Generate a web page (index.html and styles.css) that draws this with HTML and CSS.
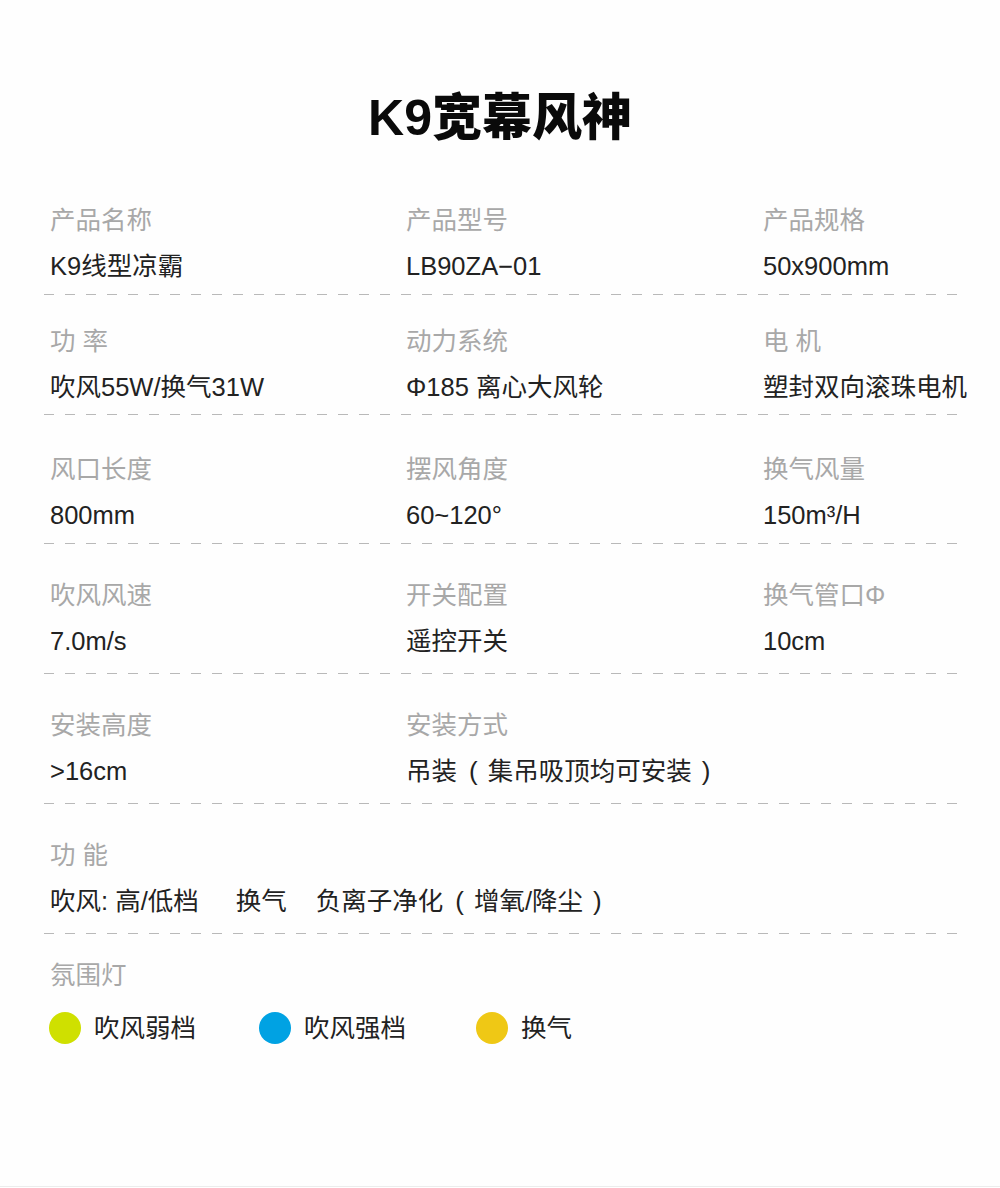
FILE: index.html
```html
<!DOCTYPE html>
<html lang="zh">
<head>
<meta charset="utf-8">
<title>K9宽幕风神</title>
<link rel="stylesheet" href="styles.css">
</head>
<body>
<div class="page">
  <h1 class="title"><span class="latin">K9</span>宽幕风神</h1>
  <div class="specs">
    <div class="row row--first">
      <div class="cell"><div class="label">产品名称</div><div class="value">K9线型凉霸</div></div>
      <div class="cell"><div class="label">产品型号</div><div class="value">LB90ZA−01</div></div>
      <div class="cell"><div class="label">产品规格</div><div class="value">50x900mm</div></div>
    </div>
    <div class="row row--second">
      <div class="cell"><div class="label">功 率</div><div class="value">吹风55W/换气31W</div></div>
      <div class="cell"><div class="label">动力系统</div><div class="value">Φ185 离心大风轮</div></div>
      <div class="cell"><div class="label">电 机</div><div class="value">塑封双向滚珠电机</div></div>
    </div>
    <div class="row row--third">
      <div class="cell"><div class="label">风口长度</div><div class="value">800mm</div></div>
      <div class="cell"><div class="label">摆风角度</div><div class="value">60~120°</div></div>
      <div class="cell"><div class="label">换气风量</div><div class="value">150m³/H</div></div>
    </div>
    <div class="row">
      <div class="cell"><div class="label">吹风风速</div><div class="value">7.0m/s</div></div>
      <div class="cell"><div class="label">开关配置</div><div class="value">遥控开关</div></div>
      <div class="cell"><div class="label">换气管口Φ</div><div class="value">10cm</div></div>
    </div>
    <div class="row">
      <div class="cell"><div class="label">安装高度</div><div class="value">&gt;16cm</div></div>
      <div class="cell cell--wide"><div class="label">安装方式</div><div class="value">吊装<span class="paren paren--open">(</span>集吊吸顶均可安装<span class="paren paren--close">)</span></div></div>
    </div>
    <div class="row row--single">
      <div class="cell"><div class="label">功 能</div>
        <div class="value"><span class="func">吹风: 高/低档</span><span class="func func--mid">换气</span><span class="func">负离子净化<span class="paren paren--open">(</span>增氧/降尘<span class="paren paren--close">)</span></span></div>
      </div>
    </div>
    <div class="row row--last">
      <div class="cell"><div class="label">氛围灯</div>
        <div class="lights">
          <div class="light light--1"><span class="dot dot--lime"></span><span class="light-text">吹风弱档</span></div>
          <div class="light light--2"><span class="dot dot--blue"></span><span class="light-text">吹风强档</span></div>
          <div class="light"><span class="dot dot--yellow"></span><span class="light-text">换气</span></div>
        </div>
      </div>
    </div>
  </div>
</div>
</body>
</html>
```
FILE: styles.css
```css
* { box-sizing: border-box; }
html, body { margin: 0; padding: 0; background: #ffffff; }
body {
  font-family: "Liberation Sans", "Noto Sans CJK SC", sans-serif;
  color: #222;
}
.page {
  width: 1000px;
  height: 1187px;
  border-bottom: 1px solid #ececec;
  background: #fefefe;
  padding-top: 88px;
}
.title {
  margin: 0;
  text-align: center;
  font-size: 50px;
  line-height: 60px;
  font-weight: 900;
  color: #0a0a0a;
  font-family: "Liberation Sans", "Noto Sans CJK SC", sans-serif;
}
.title .latin { font-weight: 700; }
.specs {
  margin-left: 44px;
  width: 913px;
}
.row {
  display: grid;
  grid-template-columns: 356px 357px 200px;
  padding: 36px 0 18px 6px;
  background-image: repeating-linear-gradient(90deg, #b9b9b9 0 10px, transparent 10px 21px);
  background-size: 100% 1px;
  background-position: left bottom;
  background-repeat: no-repeat;
}
.row--first { padding-top: 57px; padding-bottom: 14px; }
.row--second { padding-top: 31px; padding-bottom: 13px; }
.row--third { padding-top: 39px; padding-bottom: 14px; }
.row--single { grid-template-columns: 1fr; }
.row--last { grid-template-columns: 1fr; padding-top: 26px; background: none; }
.cell--wide { grid-column: span 2; }
.label {
  font-size: 25.5px;
  line-height: 30px;
  color: #a8a8a8;
  white-space: nowrap;
}
.value {
  margin-top: 16px;
  font-size: 25.5px;
  line-height: 30px;
  color: #222;
  white-space: nowrap;
}
.paren { display: inline-block; font-size: 26px; }
.paren--open { margin: 0 10px 0 12px; }
.paren--close { margin: 0 0 0 10px; }
.func--mid { margin: 0 29px 0 37px; }
.lights {
  display: flex;
  align-items: center;
  margin-top: 22px;
  margin-left: -1px;
}
.light {
  display: flex;
  align-items: center;
  gap: 13px;
}
.light--1 { width: 210px; }
.light--2 { width: 217px; }
.dot {
  width: 32px;
  height: 32px;
  border-radius: 50%;
  display: inline-block;
}
.dot--lime { background: #cfe000; }
.dot--blue { background: #00a2e3; }
.dot--yellow { background: #efc815; }
.light-text {
  font-size: 25.5px;
  line-height: 30px;
  color: #222;
}
```
